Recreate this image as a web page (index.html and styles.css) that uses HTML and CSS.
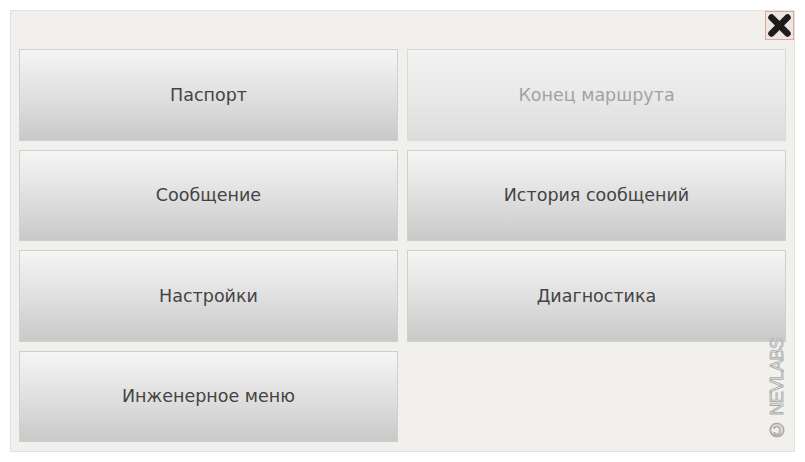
FILE: index.html
```html
<!DOCTYPE html>
<html>
<head>
    <meta charset="UTF-8" />
    <title>Меню</title>
    <link rel="stylesheet" href="styles.css">
</head>
<body>
    <div id="panel">
        <div id="topbar">
            <a href="javascript:;" id="close">
                <svg width="25" height="25" viewBox="0 0 25 25">
                    <line x1="4.5" y1="4.5" x2="20.5" y2="20.5" stroke="#1c1c1c" stroke-width="6.5" stroke-linecap="round" />
                    <line x1="20.5" y1="4.5" x2="4.5" y2="20.5" stroke="#1c1c1c" stroke-width="6.5" stroke-linecap="round" />
                </svg>
            </a>
        </div>
        <div id="menu">
            <a href="javascript:;" class="btn">Паспорт</a>
            <a href="javascript:;" class="btn off">Конец маршрута</a>
            <a href="javascript:;" class="btn">Сообщение</a>
            <a href="javascript:;" class="btn">История сообщений</a>
            <a href="javascript:;" class="btn">Настройки</a>
            <a href="javascript:;" class="btn">Диагностика</a>
            <a href="javascript:;" class="btn">Инженерное меню</a>
        </div>
        <div id="mark"><span class="copy">©</span> NEVLABS</div>
    </div>
</body>
</html>
```

FILE: styles.css
```css
body {
    margin: 0;
    background: #fff;
    font-family: "DejaVu Sans", sans-serif;
}

#panel {
    position: relative;
    box-sizing: border-box;
    width: 785px;
    height: 442px;
    margin: 10px;
    border: 1px solid #e4e2de;
    background: #f2f0ed;
    padding: 0 8px 9px 8px;
    display: flex;
    flex-direction: column;
}

#topbar {
    height: 38px;
    display: flex;
    justify-content: flex-end;
    margin-right: -8px;
}

#close {
    box-sizing: border-box;
    width: 29px;
    height: 29px;
    border: 1px solid #d9aaa0;
    background: #efe5e2;
    display: flex;
    align-items: center;
    justify-content: center;
}

#menu {
    flex: 1;
    display: grid;
    grid-template-columns: 1fr 1fr;
    grid-template-rows: repeat(4, 1fr);
    gap: 9px;
}

.btn {
    display: flex;
    align-items: center;
    justify-content: center;
    border: 1px solid #cfcfcf;
    background: linear-gradient(#f5f5f5, #dedede 55%, #c9c9c9);
    color: #444;
    font-size: 17.5px;
    text-decoration: none;
}

.btn.off {
    background: linear-gradient(#f3f3f3, #e8e8e8 55%, #dcdcdc);
    border-color: #dadada;
    color: #a2a2a2;
}

#mark {
    position: absolute;
    right: 8px;
    bottom: 10px;
    writing-mode: vertical-rl;
    transform: rotate(180deg);
    font-family: "Liberation Sans", sans-serif;
    font-size: 18px;
    line-height: 18px;
    letter-spacing: -0.8px;
    color: #f2f0ed;
    -webkit-text-stroke: 0.8px #a8a8a8;
}

#mark .copy {
    font-size: 20px;
}
```
